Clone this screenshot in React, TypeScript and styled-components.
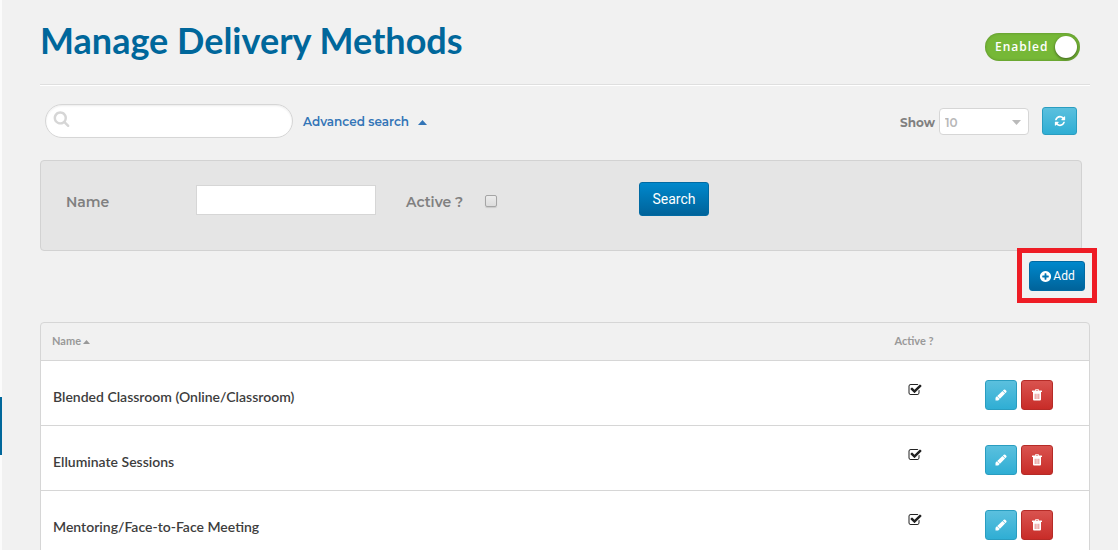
import React, { useState } from "react";
import styled, { createGlobalStyle, css } from "styled-components";

const GlobalStyle = createGlobalStyle`
  *, *::before, *::after { box-sizing: border-box; }
  body {
    margin: 0;
    background: #f1f1f1;
    font-family: Lato, "Liberation Sans", sans-serif;
    color: #3d3d3d;
  }
`;

const labelFont = css`
  font-family: Montserrat, Inter, "Liberation Sans", sans-serif;
`;

const Layout = styled.div`
  display: flex;
  height: 100vh;
  overflow: hidden;
`;

const Rail = styled.div`
  flex: none;
  width: 2px;
  padding-top: 397px;
  background: #fbfbfb;
`;

const RailMarker = styled.div`
  height: 58px;
  background: #00679b;
`;

const Main = styled.main`
  flex: 1;
  min-width: 0;
  padding: 0 28px 0 38px;
`;

const Header = styled.header`
  display: flex;
  align-items: center;
  justify-content: space-between;
  height: 85px;
  padding: 10px 10px 0 0;
  border-bottom: 1px solid #dfdfdf;
  box-shadow: 0 1px 0 #fff;
`;

const Title = styled.h1`
  margin: 0;
  padding-bottom: 14px;
  font-size: 36px;
  line-height: 48px;
  font-weight: 700;
  color: #00679b;
`;

const Toggle = styled.label<{ $on: boolean }>`
  position: relative;
  display: flex;
  align-items: center;
  justify-content: space-between;
  width: 95px;
  height: 28px;
  padding: 0 3px 0 10px;
  border-radius: 14px;
  background: ${(p) => (p.$on ? "#76b837" : "#aaa")};
  box-shadow: inset 0 0 3px rgba(0, 0, 0, 0.25);
  color: #fff;
  font: 600 12px/16px "Open Sans", "Noto Sans", sans-serif;
  letter-spacing: 1px;
  cursor: pointer;
`;

const HiddenCheck = styled.input`
  position: absolute;
  inset: 0;
  width: 100%;
  height: 100%;
  margin: 0;
  opacity: 0;
  cursor: pointer;
`;

const Knob = styled.span`
  width: 22px;
  height: 22px;
  border-radius: 50%;
  background: #fff;
  box-shadow: 0 1px 3px rgba(0, 0, 0, 0.5);
`;

const Toolbar = styled.div`
  display: flex;
  align-items: center;
  height: 34px;
  margin: 19px 13px 0 5px;
`;

const SearchBox = styled.div`
  position: relative;
  width: 248px;
  height: 34px;
  svg {
    position: absolute;
    left: 8px;
    top: 6px;
    color: #d6d6d6;
  }
`;

const SearchInput = styled.input`
  width: 100%;
  height: 100%;
  padding: 0 16px 0 32px;
  border: 1px solid #d6d6d6;
  border-radius: 17px;
  background: #fff;
  box-shadow: inset 0 1px 2px rgba(0, 0, 0, 0.08);
  font-size: 14px;
`;

const AdvancedLink = styled.a`
  ${labelFont}
  display: flex;
  align-items: center;
  gap: 9px;
  margin-left: 10px;
  padding-top: 2px;
  font-size: 12px;
  line-height: 20px;
  font-weight: 600;
  color: #3375b7;
  text-decoration: none;
`;

const ShowLabel = styled.label`
  ${labelFont}
  margin-left: auto;
  padding: 4px 4px 0 0;
  font-size: 12px;
  line-height: 20px;
  font-weight: 700;
  color: #808080;
`;

const SelectWrap = styled.div`
  position: relative;
  width: 90px;
  height: 27px;
  margin-right: 13px;
  svg {
    position: absolute;
    right: 8px;
    top: 12px;
    color: #bababa;
    pointer-events: none;
  }
`;

const Select = styled.select`
  ${labelFont}
  appearance: none;
  width: 100%;
  height: 100%;
  padding: 2px 20px 0 5px;
  border: 1px solid #d6d6d6;
  border-radius: 4px;
  background: #fff;
  color: #b8b8b8;
  font-size: 12px;
  font-weight: 600;
`;

const tones = {
  info: ["#5bc0de", "#2faed4", "#2a9dc0"],
  danger: ["#d9534f", "#c82c28", "#b52b27"],
  primary: ["#0088cc", "#00639a", "#006aa3"],
};

const Button = styled.button<{ $tone: keyof typeof tones }>`
  display: inline-flex;
  align-items: center;
  justify-content: center;
  gap: 1px;
  width: 32px;
  height: 30px;
  padding: 0;
  border: 1px solid ${(p) => tones[p.$tone][2]};
  border-radius: 3px;
  background: linear-gradient(${(p) => tones[p.$tone][0]}, ${(p) => tones[p.$tone][1]});
  color: #fff;
  font-family: Roboto, "Liberation Sans", sans-serif;
  font-size: 12px;
  cursor: pointer;
`;

const RefreshButton = styled(Button)`
  width: 35px;
  height: 28px;
`;

const SearchButton = styled(Button)`
  width: 70px;
  height: 34px;
  margin-left: 142px;
  font-size: 14px;
`;

const AddButton = styled(Button)`
  width: 56px;
`;

const Filters = styled.form`
  display: flex;
  align-items: flex-start;
  height: 91px;
  margin: 22px 8px 0 0;
  padding: 21px 25px 0;
  border: 1px solid #d2d2d2;
  border-radius: 4px;
  background: #e5e5e5;
`;

const FilterLabel = styled.label<{ $width: number }>`
  ${labelFont}
  flex: none;
  width: ${(p) => p.$width}px;
  padding-top: 10px;
  font-size: 14px;
  line-height: 20px;
  font-weight: 600;
  color: #808080;
`;

const NameInput = styled.input`
  width: 180px;
  height: 30px;
  margin: 3px 30px 0 0;
  padding: 0 8px;
  border: 1px solid #d6d6d6;
  background: #fff;
  font-size: 14px;
`;

const ActiveCheck = styled.input`
  appearance: none;
  width: 12px;
  height: 12px;
  margin: 13px 0 0;
  border: 1px solid #a5a5a5;
  border-radius: 2px;
  background: linear-gradient(#ececec, #dcdcdc);
  box-shadow: 0 1px 1px rgba(0, 0, 0, 0.12);
  &:checked { background: #3375b7; }
`;

const AddRow = styled.div`
  display: flex;
  justify-content: flex-end;
  padding: 10px 5px 31px 0;
`;

const Highlight = styled.div`
  position: relative;
  display: flex;
  &::after {
    content: "";
    position: absolute;
    inset: -13px -12px -12px;
    border: 5px solid #ee1c25;
    pointer-events: none;
  }
`;

const TableFrame = styled.div`
  border: 1px solid #d6d6d6;
  border-radius: 4px;
  overflow: hidden;
`;

const Table = styled.table`
  width: 100%;
  border-collapse: separate;
  border-spacing: 0;
  table-layout: fixed;
`;

const Th = styled.th<{ $width?: number; $center?: boolean }>`
  width: ${(p) => (p.$width ? `${p.$width}px` : "auto")};
  height: 38px;
  padding: 0 11px 2px;
  border-bottom: 1px solid #d6d6d6;
  text-align: ${(p) => (p.$center ? "center" : "left")};
  font-size: 11px;
  line-height: 16px;
  font-weight: 700;
  color: #999;
  svg { margin-left: 2px; vertical-align: 1px; }
`;

const Td = styled.td<{ $kind: "name" | "active" | "actions" }>`
  height: 65px;
  border-bottom: 1px solid #d6d6d6;
  background: #fff;
  vertical-align: top;
  font-size: 14px;
  line-height: 20px;
  font-weight: 600;
  ${(p) =>
    ({
      name: "padding: 26px 12px 0;",
      active: "padding: 21px 0 0; text-align: center;",
      actions: "padding: 19px 0 0 13px;",
    })[p.$kind]}
`;

const RowCheck = styled.label`
  position: relative;
  display: inline-flex;
  padding-left: 1px;
  color: #222;
`;

const Actions = styled.div`
  display: flex;
  gap: 4px;
`;

const iconPaths = {
  search:
    "M1216 832q0-185-131.5-316.5t-316.5-131.5-316.5 131.5-131.5 316.5 131.5 316.5 316.5 131.5 316.5-131.5 131.5-316.5zm512 832q0 52-38 90t-90 38q-54 0-90-38l-343-342q-179 124-399 124-143 0-273.5-55.5t-225-150-150-225-55.5-273.5 55.5-273.5 150-225 225-150 273.5-55.5 273.5 55.5 225 150 150 225 55.5 273.5q0 220-124 399l343 343q37 37 37 90z",
  refresh:
    "M1639 1056q0 5-1 7-64 268-268 434.5t-478 166.5q-146 0-282.5-55t-243.5-157l-129 129q-19 19-45 19t-45-19-19-45v-448q0-26 19-45t45-19h448q26 0 45 19t19 45-19 45l-137 137q71 66 161 102t187 36q134 0 250-65t186-179q11-17 53-117 8-23 30-23h192q13 0 22.5 9.5t9.5 22.5zm25-800v448q0 26-19 45t-45 19h-448q-26 0-45-19t-19-45 19-45l138-138q-148-137-349-137-134 0-250 65t-186 179q-11 17-53 117-8 23-30 23h-199q-13 0-22.5-9.5t-9.5-22.5v-7q65-268 270-434.5t480-166.5q146 0 284 55.5t245 156.5l130-129q19-19 45-19t45 19 19 45z",
  check:
    "M1472 930v318q0 119-84.5 203.5t-203.5 84.5h-832q-119 0-203.5-84.5t-84.5-203.5v-832q0-119 84.5-203.5t203.5-84.5h832q63 0 117 25 15 7 18 23 3 17-9 29l-49 49q-10 10-23 10-3 0-9-2-23-6-45-6h-832q-66 0-113 47t-47 113v832q0 66 47 113t113 47h832q66 0 113-47t47-113v-254q0-13 9-22l64-64q10-10 23-10 6 0 12 3 20 8 20 29zm231-489l-814 814q-24 24-57 24t-57-24l-430-430q-24-24-24-57t24-57l110-110q24-24 57-24t57 24l263 263 647-647q24-24 57-24t57 24l110 110q24 24 24 57t-24 57z",
  plus:
    "M1344 960v-128q0-26-19-45t-45-19h-256v-256q0-26-19-45t-45-19h-128q-26 0-45 19t-19 45v256h-256q-26 0-45 19t-19 45v128q0 26 19 45t45 19h256v256q0 26 19 45t45 19h128q26 0 45-19t19-45v-256h256q26 0 45-19t19-45zm320-64q0 209-103 385.5t-279.5 279.5-385.5 103-385.5-103-279.5-279.5-103-385.5 103-385.5 279.5-279.5 385.5-103 385.5 103 279.5 279.5 103 385.5z",
};

const Icon = ({ name, size }: { name: keyof typeof iconPaths; size: number }) => (
  <svg width={size} height={size} viewBox="0 0 1792 1792" fill="currentColor" aria-hidden="true">
    <path d={iconPaths[name]} />
  </svg>
);

const Caret = ({ w, h, down }: { w: number; h: number; down?: boolean }) => (
  <svg width={w} height={h} viewBox="0 0 10 5" preserveAspectRatio="none" fill="currentColor" aria-hidden="true">
    <path d={down ? "M0 0h10L5 5z" : "M0 5h10L5 0z"} />
  </svg>
);

const Pencil = () => (
  <svg width="12" height="12" viewBox="0 0 12 12" fill="currentColor" aria-hidden="true">
    <path d="M7.9 1.5 8.8.7Q9.6.1 10.3.8l1 1q.7.8 0 1.5l-.9.9zM7.5 1.9l2.6 2.6-5.1 5.2-2.8-2.8zM1.8 7.3l2.9 2.8-1.5 1.5H.5V8.7z" />
  </svg>
);

const Trash = () => (
  <svg width="12" height="12" viewBox="0 0 12 12" fill="currentColor" aria-hidden="true">
    <path
      fillRule="evenodd"
      d="M4 1.5V1q0-.7.7-.7h2.6Q8 .3 8 1v.5h2.5q.5 0 .5.5v1H1V2q0-.5.5-.5zM4.8 1v.5h2.4V1zM2 3h8v7.5q0 1-1 1H3q-1 0-1-1zM3.8 4.8v5.2h.6V4.8zM5.7 4.8v5.2h.6V4.8zM7.6 4.8v5.2h.6V4.8z"
    />
  </svg>
);

const methods = [
  "Blended Classroom (Online/Classroom)",
  "Elluminate Sessions",
  "Mentoring/Face-to-Face Meeting",
];

export default function App() {
  const [enabled, setEnabled] = useState(true);
  return (
    <Layout>
      <GlobalStyle />
      <Rail>
        <RailMarker />
      </Rail>
      <Main>
        <Header>
          <Title>Manage Delivery Methods</Title>
          <Toggle $on={enabled}>
            <HiddenCheck type="checkbox" checked={enabled} onChange={() => setEnabled(!enabled)} />
            Enabled
            <Knob />
          </Toggle>
        </Header>
        <Toolbar>
          <SearchBox>
            <SearchInput type="text" aria-label="Search delivery methods" />
            <Icon name="search" size={17} />
          </SearchBox>
          <AdvancedLink href="#filters">
            Advanced search
            <Caret w={9} h={5} />
          </AdvancedLink>
          <ShowLabel htmlFor="page-size">Show</ShowLabel>
          <SelectWrap>
            <Select id="page-size" defaultValue="10">
              <option>10</option>
              <option>25</option>
              <option>50</option>
            </Select>
            <Caret w={9} h={5} down />
          </SelectWrap>
          <RefreshButton $tone="info" type="button" aria-label="Refresh">
            <Icon name="refresh" size={12} />
          </RefreshButton>
        </Toolbar>
        <Filters id="filters" onSubmit={(e) => e.preventDefault()}>
          <FilterLabel $width={130} htmlFor="filter-name">Name</FilterLabel>
          <NameInput id="filter-name" type="text" />
          <FilterLabel $width={79} htmlFor="filter-active">Active ?</FilterLabel>
          <ActiveCheck id="filter-active" type="checkbox" />
          <SearchButton $tone="primary" type="submit">Search</SearchButton>
        </Filters>
        <AddRow>
          <Highlight>
            <AddButton $tone="primary" type="button">
              <Icon name="plus" size={13} />
              Add
            </AddButton>
          </Highlight>
        </AddRow>
        <TableFrame>
          <Table>
            <thead>
              <tr>
                <Th>
                  Name
                  <Caret w={7} h={4} />
                </Th>
                <Th $width={116} $center>Active ?</Th>
                <Th $width={117} aria-label="Actions" />
              </tr>
            </thead>
            <tbody>
              {methods.map((name) => (
                <tr key={name}>
                  <Td $kind="name">{name}</Td>
                  <Td $kind="active">
                    <RowCheck>
                      <HiddenCheck type="checkbox" checked readOnly aria-label={`${name} active`} />
                      <Icon name="check" size={14} />
                    </RowCheck>
                  </Td>
                  <Td $kind="actions">
                    <Actions>
                      <Button $tone="info" type="button" aria-label={`Edit ${name}`}>
                        <Pencil />
                      </Button>
                      <Button $tone="danger" type="button" aria-label={`Delete ${name}`}>
                        <Trash />
                      </Button>
                    </Actions>
                  </Td>
                </tr>
              ))}
            </tbody>
          </Table>
        </TableFrame>
      </Main>
    </Layout>
  );
}
